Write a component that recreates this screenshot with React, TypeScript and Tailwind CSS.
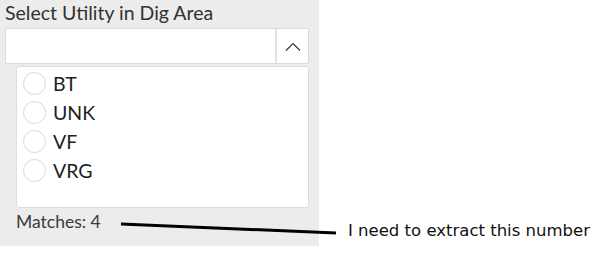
import React from "react";

const utilities = ["BT", "UNK", "VF", "VRG"];

function ChevronUp() {
  return (
    <svg width="16" height="9" viewBox="0 0 16 9" fill="none">
      <path d="M1 8.5 L8 1.5 L15 8.5" stroke="#2b3a3a" strokeWidth="1.2" />
    </svg>
  );
}

export default function App() {
  return (
    <div className="relative flex w-[606px] h-[271px] bg-white">
      <div className="w-[319px] h-[246px] bg-[#ebeceb] pl-[5px] pr-[10px] flex flex-col font-['Lato',sans-serif]">
        <div className="h-[28px] text-[19.5px] leading-[25px] text-[#323232]">Select Utility in Dig Area</div>
        <div className="flex h-[36px] bg-white border border-[#dadada] rounded-[2px]">
          <div className="flex-1" />
          <div className="w-[33px] border-l-2 border-[#e3e3e3] flex items-center justify-center">
            <ChevronUp />
          </div>
        </div>
        <div className="ml-[11px] mt-[2px] h-[142px] bg-white border border-[#dedede] rounded-[3px] pt-[5px] pl-[6px] flex flex-col gap-[6px]">
          {utilities.map((u) => (
            <div key={u} className="flex items-center gap-[7px] h-[23px]">
              <span className="w-[23px] h-[23px] rounded-full border border-[#d9d9d9] bg-white" />
              <span className="text-[19.5px] text-[#1e1e1e]">{u}</span>
            </div>
          ))}
        </div>
        <div className="pl-[11px] mt-[4px] text-[17.5px] leading-[20px] text-[#3b3b3b]">Matches: 4</div>
      </div>
      <div className="pl-[29px] pt-[220px] text-[16.5px] leading-[22px] text-[#111] font-['DejaVu_Sans',sans-serif]">
        I need to extract this number
      </div>
      <svg className="absolute left-0 top-0 pointer-events-none" width="606" height="271">
        <path d="M121 224 L336 233" stroke="#000" strokeWidth="3" fill="none" />
      </svg>
    </div>
  );
}
